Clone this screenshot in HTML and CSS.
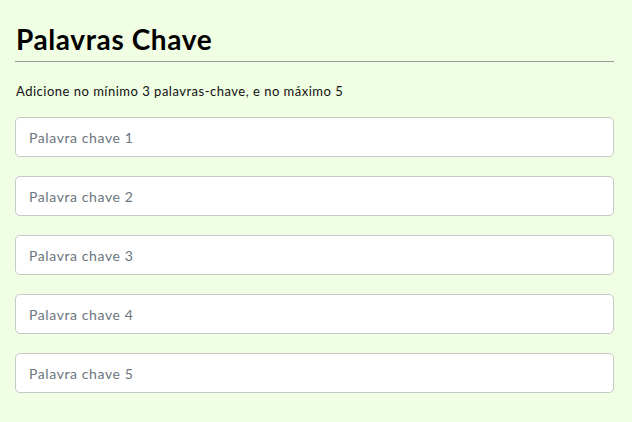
FILE: index.html
```html
<!DOCTYPE html>
<html lang="pt">
<head>
<meta charset="utf-8">
<title>Palavras Chave</title>
<link rel="stylesheet" href="styles.css">
</head>
<body>
<main class="page">
  <h1 class="title">Palavras Chave</h1>
  <hr class="rule">
  <p class="hint">Adicione no mínimo 3 palavras-chave, e no máximo 5</p>
  <form class="fields">
    <input class="field" type="text" placeholder="Palavra chave 1">
    <input class="field" type="text" placeholder="Palavra chave 2">
    <input class="field" type="text" placeholder="Palavra chave 3">
    <input class="field" type="text" placeholder="Palavra chave 4">
    <input class="field" type="text" placeholder="Palavra chave 5">
  </form>
</main>
</body>
</html>
```
FILE: styles.css
```css
html, body {
  margin: 0;
  padding: 0;
  background: #f0fee3;
}
body {
  font-family: "Lato", "DejaVu Sans", sans-serif;
  color: #111;
}
.page {
  padding: 22px 18px 0 15px;
  display: flex;
  flex-direction: column;
}
.title {
  margin: 0;
  padding-left: 1px;
  font-size: 28px;
  font-weight: 700;
  letter-spacing: 0.6px;
  line-height: 34px;
  color: #000;
}
.rule {
  margin: 5px 0 0 0;
  border: 0;
  border-top: 1px solid #999;
  height: 0;
}
.hint {
  margin: 21px 0 0 1px;
  font-size: 13px;
  letter-spacing: 0.5px;
  line-height: 16px;
  color: #111;
}
.fields {
  margin-top: 18px;
  display: flex;
  flex-direction: column;
  gap: 19px;
}
.field {
  box-sizing: border-box;
  height: 40px;
  width: 100%;
  margin: 0;
  padding: 0 13px;
  border: 1px solid #c8c8c8;
  border-radius: 5px;
  background: #fff;
  font-family: inherit;
  font-size: 14px;
  letter-spacing: 0.6px;
  color: #333;
  outline: none;
}
.field::placeholder {
  color: #6c757d;
}
```
